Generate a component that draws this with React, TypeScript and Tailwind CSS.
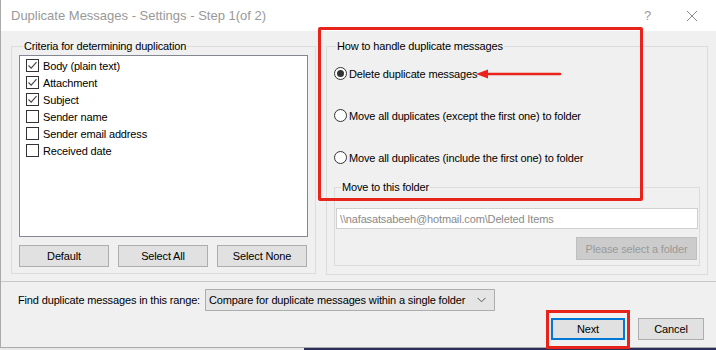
import React from "react";

const font = "font-['Liberation_Sans',Arial,sans-serif]";

function CheckBox({ checked }: { checked: boolean }) {
  return (
    <span className="w-[13px] h-[13px] border border-[#333] bg-white flex items-center justify-center flex-shrink-0">
      {checked && (
        <svg width="11" height="11" viewBox="0 0 11 11">
          <path d="M1.5 5.5 L4.2 8.2 L9.5 2.2" fill="none" stroke="#444" strokeWidth="1.1" />
        </svg>
      )}
    </span>
  );
}

function Radio({ checked }: { checked: boolean }) {
  return (
    <span className="w-[13px] h-[13px] rounded-full border border-[#333] bg-white flex items-center justify-center flex-shrink-0">
      {checked && <span className="w-[7px] h-[7px] rounded-full bg-[#333]" />}
    </span>
  );
}

const criteria = [
  { label: "Body (plain text)", checked: true },
  { label: "Attachment", checked: true },
  { label: "Subject", checked: true },
  { label: "Sender name", checked: false },
  { label: "Sender email address", checked: false },
  { label: "Received date", checked: false },
];

export default function App() {
  return (
    <div className={`relative w-[716px] h-[350px] overflow-hidden bg-[#f0f0f0] text-[11px] leading-[14px] tracking-[-0.15px] text-black ${font}`}>
      {/* Title bar */}
      <div className="h-[31px] bg-white flex items-center pl-[10px] border-l border-[#aaa]">
        <span className="text-[#999] text-[13px] tracking-normal">Duplicate Messages - Settings - Step 1(of 2)</span>
        <span className="ml-auto mr-[35px] text-[#999] text-[13px]">?</span>
        <svg width="12" height="12" viewBox="0 0 12 12" className="mr-[18px]">
          <path d="M1 1 L11 11 M11 1 L1 11" stroke="#888" strokeWidth="1" />
        </svg>
      </div>

      <div className="h-[316px] border-l border-[#aaa] flex flex-col">
        <div className="flex gap-[10px] pl-[10px] pt-[8px]">
          {/* Left group */}
          <fieldset className="w-[305px] min-w-0 shrink-0 h-[235px] border border-[#dcdcdc] px-[7px]">
            <legend className="px-[1px] ml-[4px]">Criteria for determining duplication</legend>
            <div className="mt-[2px] h-[182px] bg-white border border-[#828790] pt-[3px] pl-[6px] flex flex-col gap-[4px]">
              {criteria.map((c) => (
                <div key={c.label} className="flex items-center gap-[4px] h-[13px]">
                  <CheckBox checked={c.checked} />
                  <span>{c.label}</span>
                </div>
              ))}
            </div>
            <div className="mt-[8px] flex gap-[9px]">
              {["Default", "Select All", "Select None"].map((b) => (
                <button key={b} className="w-[90px] h-[22px] bg-[#e1e1e1] border border-[#adadad] text-center">
                  {b}
                </button>
              ))}
            </div>
          </fieldset>

          {/* Right group */}
          <fieldset className="w-[382px] min-w-0 shrink-0 h-[236px] border border-[#dcdcdc] px-[7px]">
            <legend className="px-[1px] ml-[2px]">How to handle duplicate messages</legend>
            <div className="flex flex-col gap-[29px] mt-[14px]">
              <div className="flex items-center gap-[2px] h-[13px]">
                <Radio checked />
                <span>Delete duplicate messages</span>
              </div>
              <div className="flex items-center gap-[2px] h-[13px]">
                <Radio checked={false} />
                <span>Move all duplicates (except the first one) to folder</span>
              </div>
              <div className="flex items-center gap-[2px] h-[13px]">
                <Radio checked={false} />
                <span>Move all duplicates (include the first one) to folder</span>
              </div>
            </div>
            <fieldset className="mt-[16px] w-full min-w-0 h-[86px] border border-[#dcdcdc] px-[1px]">
              <legend className="px-[1px] ml-[5px]">Move to this folder</legend>
              <div className="mt-[14px] h-[21px] bg-white border border-[#d0d0d0] flex items-center pl-[3px] text-[#8a8a8a]">
                \\nafasatsabeeh@hotmail.com\Deleted Items
              </div>
              <div className="flex justify-end mt-[8px] pr-[1px]">
                <div className="w-[121px] h-[23px] bg-[#cccccc] border border-[#bfbfbf] flex items-center justify-center text-[#9a9a9a]">
                  Please select a folder
                </div>
              </div>
            </fieldset>
          </fieldset>
        </div>

        <div className="mt-[6px] border-t border-[#c8c8c8]" />

        <div className="flex items-center pl-[17px] mt-[7px] h-[22px]">
          <span className="mr-[5px]">Find duplicate messages in this range:</span>
          <div className="w-[290px] h-[22px] bg-[#e5e5e5] border border-[#adadad] flex items-center pl-[3px] pr-[8px]">
            <span className="whitespace-nowrap">Compare for duplicate messages within a single folder</span>
            <svg width="9" height="6" viewBox="0 0 9 6" className="ml-auto">
              <path d="M0.5 0.8 L4.5 4.8 L8.5 0.8" fill="none" stroke="#555" strokeWidth="1" />
            </svg>
          </div>
        </div>

        <div className="flex justify-end gap-[13px] pr-[12px] mt-[7px]">
          <button className="w-[74px] h-[22px] bg-[#e1e1e1] border-2 border-[#0078d7]">Next</button>
          <button className="w-[66px] h-[22px] bg-[#e1e1e1] border border-[#adadad]">Cancel</button>
        </div>
      </div>

      {/* bottom edge */}
      <div className="flex h-[3px] border-t border-[#aaa]">
        <div className="w-[304px] bg-[#e8e8e8]" />
        <div className="flex-1 bg-[#2b2d5a]" />
      </div>

      {/* Red annotations */}
      <div className="absolute left-[318px] top-[27px] w-[325px] h-[174px] border-[3px] border-[#e8231b] rounded-[2px] pointer-events-none" />
      <div className="absolute left-[546px] top-[310px] w-[84px] h-[39px] border-[3px] border-[#e8231b] pointer-events-none" />
      <svg className="absolute left-[474px] top-[68px] pointer-events-none" width="88" height="12" viewBox="0 0 88 12">
        <path d="M86 6 L12 6" stroke="#e8231b" strokeWidth="2.5" strokeLinecap="round" />
        <path d="M2 6 L14 1.5 L14 10.5 Z" fill="#e8231b" />
      </svg>
    </div>
  );
}
